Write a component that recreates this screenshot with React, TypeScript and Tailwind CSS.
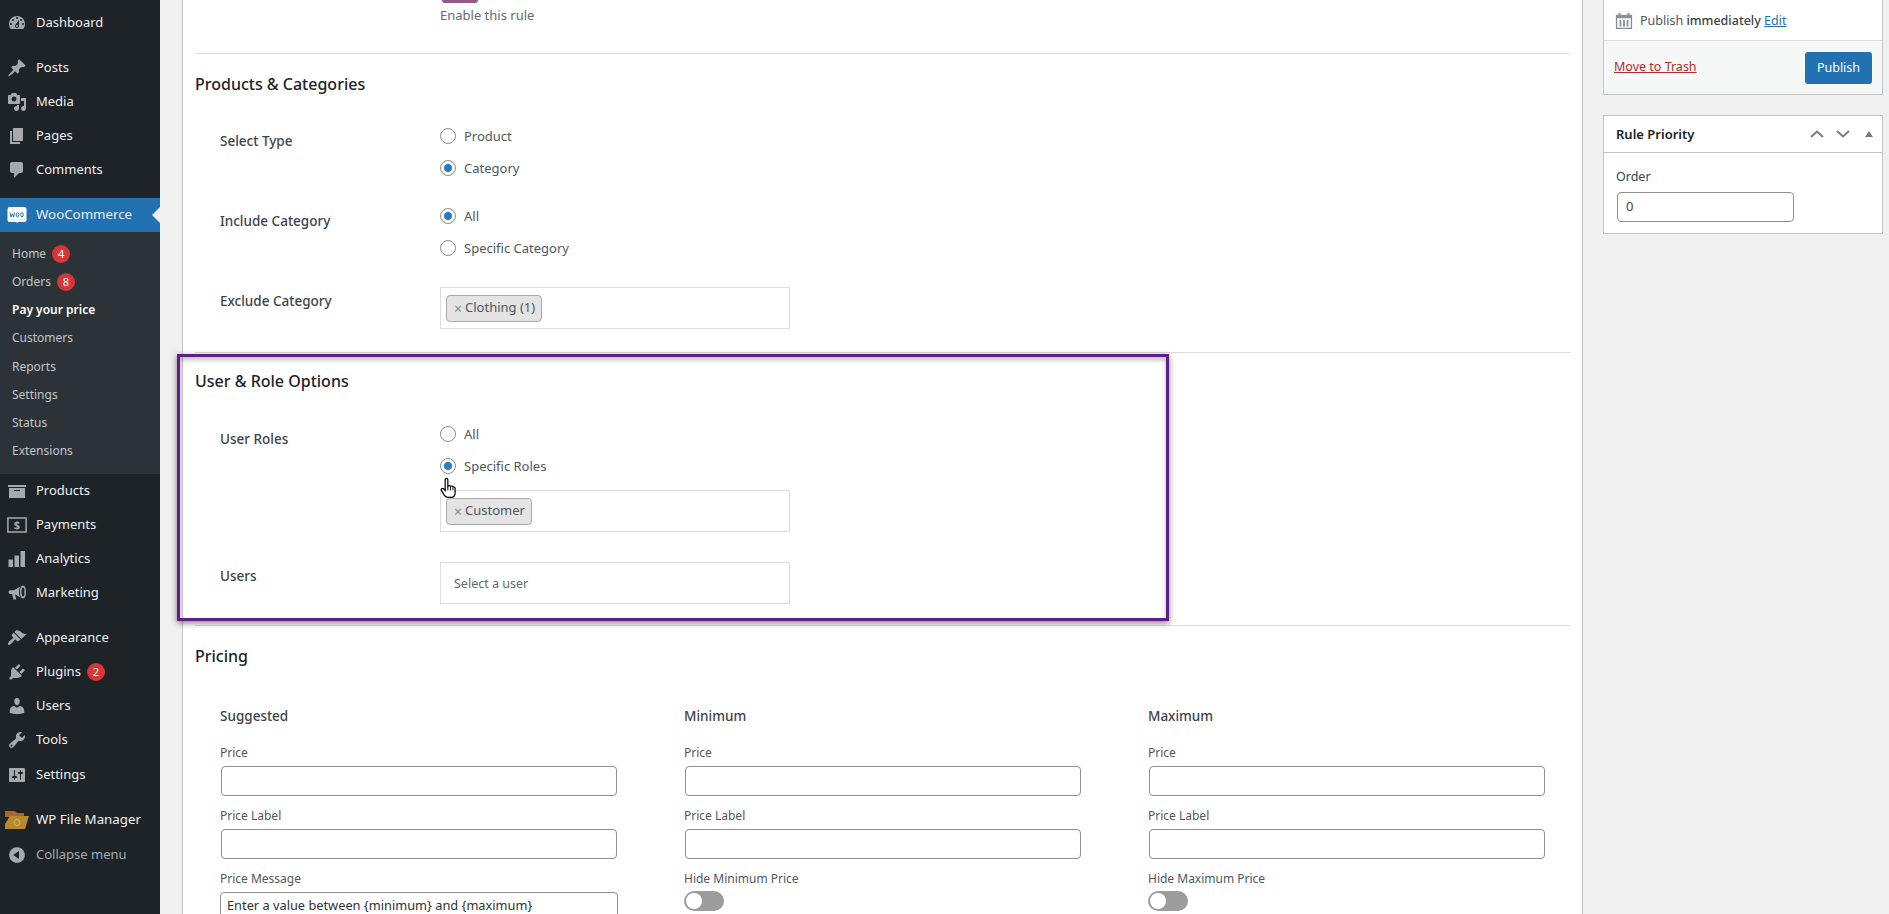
import React from "react";

const P: Record<string, string> = {
  dashboard: "M3.76 16h12.48c1.1-1.37 1.76-3.11 1.76-5 0-4.42-3.58-8-8-8s-8 3.58-8 8c0 1.89.66 3.63 1.76 5zM10 4c.55 0 1 .45 1 1s-.45 1-1 1-1-.45-1-1 .45-1 1-1zM6 6c.55 0 1 .45 1 1s-.45 1-1 1-1-.45-1-1 .45-1 1-1zm8 0c.55 0 1 .45 1 1s-.45 1-1 1-1-.45-1-1 .45-1 1-1zm-5.37 5.55L12 7v6c0 1.1-.9 2-2 2s-2-.9-2-2c0-.57.24-1.08.63-1.45zM4 10c.55 0 1 .45 1 1s-.45 1-1 1-1-.45-1-1 .45-1 1-1zm12 0c.55 0 1 .45 1 1s-.45 1-1 1-1-.45-1-1 .45-1 1-1zm-5 3c0-.55-.45-1-1-1s-1 .45-1 1 .45 1 1 1 1-.45 1-1z",
  post: "M10.44 3.02l1.82-1.82 6.36 6.35-1.83 1.82c-1.05-.68-2.48-.57-3.41.36l-.75.75c-.92.93-1.04 2.35-.35 3.41l-1.83 1.82-2.41-2.41-2.8 2.79c-.42.42-3.38 2.71-3.8 2.29s1.86-3.39 2.28-3.81l2.79-2.79L4.1 9.36l1.83-1.82c1.05.69 2.48.57 3.4-.36l.75-.75c.93-.92 1.05-2.35.36-3.41z",
  media: "M13 11V4c0-.55-.45-1-1-1h-1.67L9 1H5L3.67 3H2c-.55 0-1 .45-1 1v7c0 .55.45 1 1 1h10c.55 0 1-.45 1-1zM7 4.5c1.38 0 2.5 1.12 2.5 2.5S8.38 9.5 7 9.5 4.5 8.38 4.5 7 5.62 4.5 7 4.5zM14 6h5v10.5c0 1.38-1.12 2.5-2.5 2.5S14 17.88 14 16.5s1.12-2.5 2.5-2.5c.17 0 .34.02.5.05V9h-3V6zm-4 8.05V13h2v3.5c0 1.38-1.12 2.5-2.5 2.5S7 17.88 7 16.5 8.12 14 9.5 14c.17 0 .34.02.5.05z",
  page: "M6 15V2h10v13H6zm-1 1h8v2H3V5h2v11z",
  comment: "M5 2h9c1.1 0 2 .9 2 2v7c0 1.1-.9 2-2 2h-2l-5 5v-5H5c-1.1 0-2-.9-2-2V4c0-1.1.9-2 2-2z",
  archive: "M19 4v2H1V4h18zM2 7h16v10H2V7zm11 3V9H7v1h6z",
  analytics: "M1.500 10.500h4.500v7.500H1.500zM7.500 6.500h4.500v11.500H7.500zM13.500 2h4.500v16h-4.500z",
  marketing: "M1.500 9c0-1 .7-1.800 1.700-1.800H7L13.500 3.500c-1 1.500-1.500 3.300-1.500 5.500s.5 4 1.500 5.500L8 11.300l1.300 5.200H6.500L5 11H3.200C2.200 11 1.500 10.200 1.500 9zM16 2.500c1.900 0 3 2.900 3 6.500s-1.100 6.500-3 6.500-3-2.900-3-6.500 1.100-6.500 3-6.500zm0 2c-1 0-1.500 2-1.500 4.500s.5 4.500 1.500 4.500 1.500-2 1.500-4.500-.5-4.500-1.500-4.500z",
  appearance: "M14.48 11.06L7.41 3.99l1.5-1.5c.5-.56 2.3-.47 3.51.32 1.21.8 1.43 1.28 2.91 2.1 1.18.64 2.45 1.26 4.45.85zm-.71.71L6.7 4.7 4.93 6.47c-.39.39-.39 1.02 0 1.41l1.06 1.06c.39.39.39 1.03 0 1.42-.6.6-1.43 1.11-2.21 1.69-.35.26-.7.53-1.01.84-1.43 1.43-2.4 3.02-1.6 3.82s2.39-.17 3.82-1.6c.31-.31.58-.66.84-1.01.58-.78 1.09-1.61 1.69-2.21.39-.39 1.03-.39 1.42 0l1.06 1.06c.39.39 1.02.39 1.41 0z",
  plugin: "M13.11 4.36L9.87 7.6 8 5.73l3.24-3.24c.35-.34 1.05-.2 1.56.32.52.51.66 1.21.31 1.55zm-8 1.77l.91-1.12 9.01 9.01-1.19.84c-.71.71-2.63 1.16-3.82 1.16H6.14L4.9 17.26c-.59.59-1.54.59-2.12 0-.59-.58-.59-1.53 0-2.12l1.24-1.24v-3.88c0-1.13.4-3.19 1.09-3.89zm7.26 3.97l3.24-3.24c.34-.35 1.04-.21 1.55.31.52.51.66 1.21.31 1.55l-3.24 3.25z",
  users: "M10 9.25c-2.27 0-2.73-3.44-2.73-3.44C7 4.02 7.82 2 9.97 2c2.16 0 2.98 2.02 2.71 3.81 0 0-.41 3.44-2.68 3.44zm0 2.57L12.72 10c2.39 0 4.52 2.33 4.52 4.53v2.49s-3.65 1.13-7.24 1.13c-3.65 0-7.24-1.13-7.24-1.13v-2.49c0-2.25 1.94-4.48 4.47-4.48z",
  tools: "M16.68 9.77c-1.34 1.34-3.3 1.67-4.95.99l-5.41 6.52c-.99.99-2.59.99-3.58 0s-.99-2.59 0-3.57l6.52-5.42c-.68-1.65-.35-3.61.99-4.95 1.28-1.28 3.12-1.62 4.72-1.06l-2.89 2.89 2.82 2.82 2.86-2.87c.53 1.58.18 3.39-1.08 4.65zM3.81 16.21c.4.39 1.04.39 1.43 0 .4-.4.4-1.04 0-1.43-.39-.4-1.03-.4-1.43 0-.39.39-.39 1.03 0 1.43z",
  settings: "M18 16V4c0-.55-.45-1-1-1H3c-.55 0-1 .45-1 1v12c0 .55.45 1 1 1h14c.55 0 1-.45 1-1zM8 11h1c.55 0 1 .45 1 1s-.45 1-1 1H8v1.5c0 .28-.22.5-.5.5s-.5-.22-.5-.5V13H6c-.55 0-1-.45-1-1s.45-1 1-1h1V5.5c0-.28.22-.5.5-.5s.5.22.5.5V11zm5-2h-1c-.55 0-1-.45-1-1s.45-1 1-1h1V5.5c0-.28.22-.5.5-.5s.5.22.5.5V7h1c.55 0 1 .45 1 1s-.45 1-1 1h-1v5.5c0 .28-.22.5-.5.5s-.5-.22-.5-.5V9z",
  collapse: "M10 2.16c4.33 0 7.84 3.51 7.84 7.84s-3.51 7.84-7.84 7.84S2.16 14.33 2.16 10 5.71 2.16 10 2.16zm2 11.72V6.12L6.18 9.97z",
};

function Dash({ name, cls = "w-5 h-5 text-[#a7aaad]" }: { name: string; cls?: string }) {
  return (
    <svg viewBox="0 0 20 20" className={cls} fill="currentColor">
      <path fillRule="evenodd" d={P[name]} />
    </svg>
  );
}

function PaymentsIcon() {
  return (
    <svg viewBox="0 0 20 20" className="h-5 w-5 text-[#a7aaad]">
      <rect x="0.900" y="3" width="18.200" height="14" fill="none" stroke="currentColor" strokeWidth="1.500" />
      <text x="10" y="14" textAnchor="middle" fontSize="11" fontWeight="700" fill="currentColor">$</text>
    </svg>
  );
}

function Woo() {
  return (
    <svg viewBox="0 0 20 20" className="h-5 w-5">
      <path d="M2.500 2h15A2 2 0 0 1 19.500 4v11a2 2 0 0 1-2 2H11l-1 1.500L9.500 17H2.500a2 2 0 0 1-2-2V4a2 2 0 0 1 2-2z" fill="#fff" />
      <path d="M3 7.500l1 4.500 1.300-3L6.600 12l1-4.500M9.200 9.800a1.300 2 0 1 0 2.600 0a1.300 2 0 1 0-2.600 0M13.700 9.800a1.300 2 0 1 0 2.600 0a1.300 2 0 1 0-2.600 0" fill="none" stroke="#2271b1" strokeWidth="1" />
    </svg>
  );
}

function Folder() {
  return (
    <svg viewBox="0 0 24 20" className="h-5 w-[24px]">
      <path d="M0 1h10l2 2h7v4H0z" fill="#a8672a" />
      <path d="M5 6h19l-4 13H0V14z" fill="#b98a2c" />
      <circle cx="12" cy="12.500" r="3" fill="none" stroke="#d5b26a" strokeWidth="1" />
    </svg>
  );
}

function Badge({ n }: { n: number }) {
  return (
    <span className="ml-[6px] inline-flex h-[18px] w-[18px] items-center justify-center rounded-full bg-[#d63638] text-[11px] text-white">
      {n}
    </span>
  );
}

function MenuItem({ icon, label, badge, mt, wide }: { icon: React.ReactNode; label: string; badge?: number; mt?: boolean; wide?: boolean }) {
  return (
    <div className={`flex h-[34px] items-center text-[#f0f0f1] ${wide ? "text-[13.3px]" : "text-[13px]"} ${mt ? "mt-[11px]" : ""}`}>
      <span className="flex w-[36px] shrink-0 justify-center pr-[2px]">{icon}</span>
      <span>{label}</span>
      {badge ? <Badge n={badge} /> : null}
    </div>
  );
}

function SubItem({ label, badge, active }: { label: string; badge?: number; active?: boolean }) {
  return (
    <div className={`flex h-[28.14px] items-center pl-3 text-[12px] ${active ? "font-semibold text-white" : "text-[#c3c4c7]"}`}>
      <span>{label}</span>
      {badge ? <Badge n={badge} /> : null}
    </div>
  );
}

function Sidebar() {
  return (
    <aside className="w-[160px] shrink-0 bg-[#1d2327] pt-[6px]">
      <MenuItem icon={<Dash name="dashboard" />} label="Dashboard" />
      <MenuItem mt icon={<Dash name="post" />} label="Posts" />
      <MenuItem icon={<Dash name="media" />} label="Media" />
      <MenuItem icon={<Dash name="page" />} label="Pages" />
      <MenuItem icon={<Dash name="comment" />} label="Comments" />
      <div className="relative mt-[11px] bg-[#2271b1]">
        <MenuItem wide icon={<Woo />} label="WooCommerce" />
        <span className="absolute right-0 top-[9px] h-0 w-0 border-y-[8px] border-r-[8px] border-y-transparent border-r-[#f0f0f1]" />
      </div>
      <div className="bg-[#2c3338] pb-[9px] pt-[8px]">
        <SubItem label="Home" badge={4} />
        <SubItem label="Orders" badge={8} />
        <SubItem label="Pay your price" active />
        <SubItem label="Customers" />
        <SubItem label="Reports" />
        <SubItem label="Settings" />
        <SubItem label="Status" />
        <SubItem label="Extensions" />
      </div>
      <MenuItem icon={<Dash name="archive" />} label="Products" />
      <MenuItem icon={<PaymentsIcon />} label="Payments" />
      <MenuItem icon={<Dash name="analytics" />} label="Analytics" />
      <MenuItem icon={<Dash name="marketing" />} label="Marketing" />
      <div className="mt-[11px]">
        <MenuItem icon={<Dash name="appearance" />} label="Appearance" />
      </div>
      <MenuItem icon={<Dash name="plugin" />} label="Plugins" badge={2} />
      <MenuItem icon={<Dash name="users" />} label="Users" />
      <MenuItem icon={<Dash name="tools" />} label="Tools" />
      <div className="mt-px">
        <MenuItem icon={<Dash name="settings" />} label="Settings" />
      </div>
      <MenuItem mt wide icon={<Folder />} label="WP File Manager" />
      <div className="mt-[1px] flex h-[34px] items-center text-[13px] text-[#a7aaad]">
        <span className="flex w-[36px] shrink-0 justify-center pr-[2px]"><Dash name="collapse" /></span>
        <span>Collapse menu</span>
      </div>
    </aside>
  );
}

function Radio({ label, on }: { label: string; on?: boolean }) {
  return (
    <div className="flex h-[32px] items-center gap-2 text-[13px] text-[#50575e]">
      <span className="flex h-4 w-4 items-center justify-center rounded-full border border-[#8c8f94] bg-white">
        {on ? <span className="h-2 w-2 rounded-full bg-[#2a7cc7]" /> : null}
      </span>
      <span className="pt-px">{label}</span>
    </div>
  );
}

function Row({ label, labelPad, children, cls = "" }: { label: string; labelPad: string; children: React.ReactNode; cls?: string }) {
  return (
    <div className={`flex pl-[25px] ${cls}`}>
      <div className={`w-[220px] shrink-0 text-[13.5px] leading-5 font-medium text-[#3c434a] ${labelPad}`}>{label}</div>
      <div className="flex flex-col">{children}</div>
    </div>
  );
}

function Tag({ label }: { label: string }) {
  return (
    <span className="ml-[5px] flex h-[27px] items-center gap-[3px] rounded-[4px] border border-[#aaaaaa] bg-[#e4e4e4] pl-[7px] pr-[6px] text-[13px] text-[#50575e]">
      <span className="text-[14px] text-[#888888]">×</span>
      {label}
    </span>
  );
}

function SelectBox({ children, cls = "" }: { children: React.ReactNode; cls?: string }) {
  return <div className={`flex h-[42px] w-[350px] items-center border border-[#dcdcde] bg-white ${cls}`}>{children}</div>;
}

function Heading({ children }: { children: React.ReactNode }) {
  return <h2 className="h-[22px] text-[16px] leading-[22px] font-medium text-[#1d2327]">{children}</h2>;
}

function Lab({ t }: { t: string }) {
  return <div className="mt-[10px] h-[18px] pt-px text-[12px] leading-[18px] text-[#50575e]">{t}</div>;
}

function Field({ label }: { label: string }) {
  return (
    <>
      <Lab t={label} />
      <div className="ml-px mt-[5px] h-[30px] w-[396px] rounded-[4px] border border-[#8c8f94] bg-white" />
    </>
  );
}

function Toggle() {
  return (
    <div className="mt-1 flex h-5 w-10 items-center rounded-full bg-[#9c9c9c] pl-[2px]">
      <span className="h-4 w-4 rounded-full bg-white" />
    </div>
  );
}

function PriceCol({ title, last }: { title: string; last: React.ReactNode }) {
  return (
    <div className="w-[464px] shrink-0">
      <div className="mb-[17px] h-5 text-[13.5px] leading-5 font-medium text-[#3c434a]">{title}</div>
      <Field label="Price" />
      <Field label="Price Label" />
      {last}
    </div>
  );
}

function MainPanel() {
  return (
    <main className="w-[1401px] shrink-0 overflow-hidden border-x border-[#c3c4c7] bg-white px-3">
      <section className="h-[53px] pl-[245px]">
        <div className="ml-[2px] h-[3px] w-[36px] rounded-b-[10px] bg-[#96588a]" />
        <div className="mt-[3px] text-[13px] leading-[18px] text-[#646970]">Enable this rule</div>
      </section>
      <section className="border-t border-[#dcdcde] pb-[23px] pt-[19px]">
        <Heading>Products &amp; Categories</Heading>
        <Row cls="mt-[25px]" label="Select Type" labelPad="pt-[11px]">
          <Radio label="Product" />
          <Radio label="Category" on />
        </Row>
        <Row cls="mt-4" label="Include Category" labelPad="pt-[11px]">
          <Radio label="All" on />
          <Radio label="Specific Category" />
        </Row>
        <Row cls="mt-[23px]" label="Exclude Category" labelPad="pt-1">
          <SelectBox><Tag label="Clothing (1)" /></SelectBox>
        </Row>
      </section>
      <section className="border-t border-[#dcdcde] pb-[21px] pt-[17px]">
        <Heading>User &amp; Role Options</Heading>
        <Row cls="mt-[26px]" label="User Roles" labelPad="pt-[11px]">
          <Radio label="All" />
          <Radio label="Specific Roles" on />
          <SelectBox cls="mt-2"><Tag label="Customer" /></SelectBox>
        </Row>
        <Row cls="mt-[30px]" label="Users" labelPad="pt-1">
          <SelectBox><span className="pl-[13px] pt-[2px] text-[12.5px] text-[#646970]">Select a user</span></SelectBox>
        </Row>
      </section>
      <section className="border-t border-[#dcdcde] pt-[19px]">
        <Heading>Pricing</Heading>
        <div className="mt-[39px] flex pl-[25px]">
          <PriceCol
            title="Suggested"
            last={
              <>
                <Lab t="Price Message" />
                <div className="mt-[5px] flex h-[30px] w-[398px] items-center rounded-[4px] border border-[#8c8f94] pb-[2px] pl-[6px] text-[12.8px] text-[#2c3338]">
                  Enter a value between {"{minimum}"} and {"{maximum}"}
                </div>
              </>
            }
          />
          <PriceCol title="Minimum" last={<><Lab t="Hide Minimum Price" /><Toggle /></>} />
          <PriceCol title="Maximum" last={<><Lab t="Hide Maximum Price" /><Toggle /></>} />
        </div>
      </section>
    </main>
  );
}

function Side() {
  return (
    <div className="w-[280px] shrink-0 text-[13px] text-[#3c434a]">
      <div className="border-x border-b border-[#c3c4c7] bg-white">
        <div className="flex h-[41px] items-center gap-[7px] border-b border-[#dcdcde] pl-[11px] pt-[2px] text-[12.5px]">
          <svg viewBox="0 0 20 20" className="h-[18px] w-[18px] text-[#8c8f94]" fill="currentColor">
            <path fillRule="evenodd" d="M4 1h2v2h8V1h2v2h3v16H1V3h3V1zM2.500 7v10.500h15V7h-15zM5 9h2v7H5V9zm4 0h2v7H9V9zm4 0h2v7h-2V9z" />
          </svg>
          <span className="text-[#50575e]">Publish <span className="font-medium text-[#3c434a]">immediately</span> <span className="text-[#2271b1] underline">Edit</span></span>
        </div>
        <div className="flex h-[53px] items-center justify-between bg-[#f6f7f7] px-[10px] text-[12.5px]">
          <span className="text-[#b32d2e] underline">Move to Trash</span>
          <span className="flex h-8 w-[67px] items-center justify-center rounded-[3px] bg-[#2271b1] pt-[2px] text-white">Publish</span>
        </div>
      </div>
      <div className="mt-[20px] h-[119px] border border-[#c3c4c7] bg-white">
        <div className="flex h-[37px] items-center justify-between border-b border-[#c3c4c7] pl-3">
          <span className="pt-px text-[13px] font-semibold text-[#1d2327]">Rule Priority</span>
          <span className="flex items-center text-[#787c82]">
            <span className="flex w-[26px] justify-center">
              <svg viewBox="0 0 14 8" className="h-2 w-[14px]" fill="none" stroke="currentColor" strokeWidth="2"><path d="M1 7l6-5.500L13 7" /></svg>
            </span>
            <span className="flex w-[26px] justify-center">
              <svg viewBox="0 0 14 8" className="h-2 w-[14px]" fill="none" stroke="currentColor" strokeWidth="2"><path d="M1 1l6 5.500L13 1" /></svg>
            </span>
            <span className="flex w-[26px] justify-center">
              <svg viewBox="0 0 8 6" className="h-[6px] w-2" fill="currentColor"><path d="M4 0l4 6H0z" /></svg>
            </span>
          </span>
        </div>
        <div className="pl-3 pt-[14px]">
          <div className="h-5 text-[12.5px] leading-5">Order</div>
          <div className="ml-px mt-[5px] flex h-[30px] w-[177px] items-center rounded-[4px] border border-[#8c8f94] pl-2">0</div>
        </div>
      </div>
    </div>
  );
}

export default function App() {
  return (
    <div className="relative flex h-[914px] w-[1889px] overflow-hidden bg-[#f0f0f1] font-['Noto_Sans','Open_Sans',sans-serif]">
      <Sidebar />
      <div className="flex flex-1 gap-5 pl-[22px]">
        <MainPanel />
        <Side />
      </div>
      <div className="pointer-events-none absolute left-[177px] top-[354px] h-[267px] w-[992px] border-[3px] border-[#5f1e87] shadow-[0_2px_6px_rgba(0,0,0,0.5),inset_0_3px_5px_rgba(0,0,0,0.25)]" />
      <svg viewBox="0 0 18 24" className="absolute left-[440px] top-[477px] h-[23px] w-[17px]">
        <path d="M5.500 2.500c0-1.800 2.800-1.800 2.800 0v7l.2-.3c1-.6 2.300-.4 2.600.5 1-.6 2.300-.3 2.600.7 1.200-.4 2.300.3 2.300 1.600v4.500c0 2.600-1.500 5-4.500 5H8.500c-2 0-3-1-4-2.500L1.500 14c-.9-1.400.9-2.900 2.200-1.700l1.800 1.800V2.500z" fill="#fff" stroke="#000" strokeWidth="1.300" />
        <path d="M8.300 10v4M11 10v4M13.700 11v3" stroke="#000" strokeWidth="1" fill="none" />
      </svg>
    </div>
  );
}
